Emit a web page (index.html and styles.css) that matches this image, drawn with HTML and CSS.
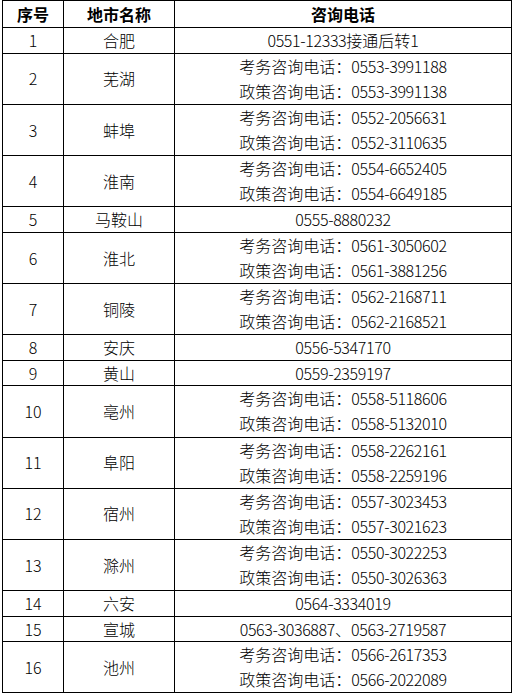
FILE: index.html
```html
<!DOCTYPE html>
<html lang="zh-CN">
<head>
<meta charset="utf-8">
<title>咨询电话</title>
<link rel="stylesheet" href="styles.css">
</head>
<body>
<table class="tbl">
  <colgroup><col class="c1"><col class="c2"><col class="c3"></colgroup>
  <thead>
    <tr><th>序号</th><th>地市名称</th><th>咨询电话</th></tr>
  </thead>
  <tbody>
    <tr><td>1</td><td>合肥</td><td><div class="ln"><span class="n">0551-12333</span>接通后转<span class="n">1</span></div></td></tr>
    <tr class="d"><td>2</td><td>芜湖</td><td><div class="ln">考务咨询电话：<span class="n">0553-3991188</span></div><div class="ln">政策咨询电话：<span class="n">0553-3991138</span></div></td></tr>
    <tr class="d"><td>3</td><td>蚌埠</td><td><div class="ln">考务咨询电话：<span class="n">0552-2056631</span></div><div class="ln">政策咨询电话：<span class="n">0552-3110635</span></div></td></tr>
    <tr class="d"><td>4</td><td>淮南</td><td><div class="ln">考务咨询电话：<span class="n">0554-6652405</span></div><div class="ln">政策咨询电话：<span class="n">0554-6649185</span></div></td></tr>
    <tr><td>5</td><td>马鞍山</td><td><div class="ln"><span class="n">0555-8880232</span></div></td></tr>
    <tr class="d"><td>6</td><td>淮北</td><td><div class="ln">考务咨询电话：<span class="n">0561-3050602</span></div><div class="ln">政策咨询电话：<span class="n">0561-3881256</span></div></td></tr>
    <tr class="d"><td>7</td><td>铜陵</td><td><div class="ln">考务咨询电话：<span class="n">0562-2168711</span></div><div class="ln">政策咨询电话：<span class="n">0562-2168521</span></div></td></tr>
    <tr><td>8</td><td>安庆</td><td><div class="ln"><span class="n">0556-5347170</span></div></td></tr>
    <tr><td>9</td><td>黄山</td><td><div class="ln"><span class="n">0559-2359197</span></div></td></tr>
    <tr class="d"><td>10</td><td>亳州</td><td><div class="ln">考务咨询电话：<span class="n">0558-5118606</span></div><div class="ln">政策咨询电话：<span class="n">0558-5132010</span></div></td></tr>
    <tr class="d"><td>11</td><td>阜阳</td><td><div class="ln">考务咨询电话：<span class="n">0558-2262161</span></div><div class="ln">政策咨询电话：<span class="n">0558-2259196</span></div></td></tr>
    <tr class="d"><td>12</td><td>宿州</td><td><div class="ln">考务咨询电话：<span class="n">0557-3023453</span></div><div class="ln">政策咨询电话：<span class="n">0557-3021623</span></div></td></tr>
    <tr class="d"><td>13</td><td>滁州</td><td><div class="ln">考务咨询电话：<span class="n">0550-3022253</span></div><div class="ln">政策咨询电话：<span class="n">0550-3026363</span></div></td></tr>
    <tr><td>14</td><td>六安</td><td><div class="ln"><span class="n">0564-3334019</span></div></td></tr>
    <tr><td>15</td><td>宣城</td><td><div class="ln"><span class="n">0563-3036887</span>、<span class="n">0563-2719587</span></div></td></tr>
    <tr class="d"><td>16</td><td>池州</td><td><div class="ln">考务咨询电话：<span class="n">0566-2617353</span></div><div class="ln">政策咨询电话：<span class="n">0566-2022089</span></div></td></tr>
  </tbody>
</table>
</body>
</html>
```
FILE: styles.css
```css
html, body {
  margin: 0;
  padding: 0;
  background: #ffffff;
}
body {
  padding: 0 0 0 2px;
  font-family: "Noto Sans CJK SC", "Noto Sans", sans-serif;
  font-size: 16px;
  color: #000000;
}
.tbl {
  border-collapse: collapse;
  table-layout: fixed;
  width: 509px;
}
.c1 { width: 61px; }
.c2 { width: 111px; }
.c3 { width: 337px; }
.tbl th,
.tbl td {
  border: 1px solid #000000;
  padding: 0;
  text-align: center;
  vertical-align: middle;
  white-space: nowrap;
}
.tbl th {
  font-weight: bold;
  line-height: 26px;
}
.tbl td {
  font-weight: 300;
  line-height: 24.6px;
}
.tbl tr.d .ln {
  line-height: 25.1px;
}
.n {
  letter-spacing: -0.35px;
}
```
